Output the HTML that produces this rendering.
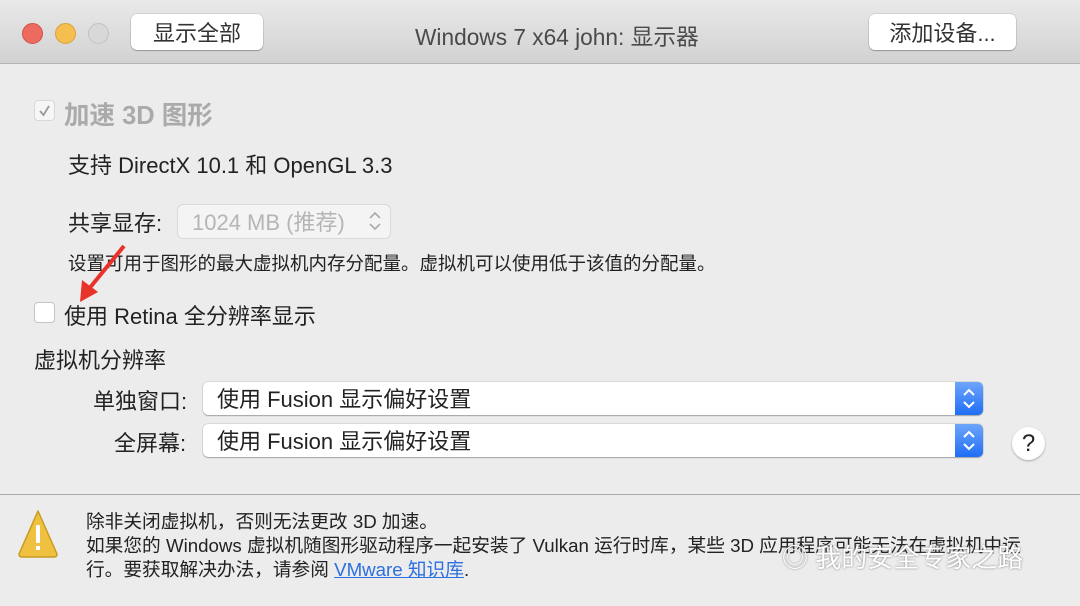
<!DOCTYPE html><html><head><meta charset="utf-8"><style>
body{margin:0;width:1080px;height:606px;background:#ececec;font-family:"Liberation Sans","Noto Sans CJK SC",sans-serif;color:#222;position:relative;overflow:hidden}
.a{position:absolute;white-space:nowrap}
.tb{position:absolute;left:0;top:0;width:1080px;height:63px;background:linear-gradient(#e9e9e9,#d2d2d2);border-bottom:1px solid #b3b3b3}
.dot{position:absolute;top:23px;width:19px;height:19px;border-radius:50%}
.btn{position:absolute;top:14px;height:36px;background:#fff;border-radius:6px;box-shadow:0 1px 1px rgba(0,0,0,.25),0 0 0 .5px rgba(0,0,0,.15);font-size:22px;line-height:39px;text-align:center;color:#333}
.cb{position:absolute;width:21px;height:21px;border-radius:4px;background:#fff;border:1px solid #c4c4c4;box-sizing:border-box}
.sel{position:absolute;left:203px;width:780px;height:33px;background:#fff;border-radius:5px;box-shadow:0 1px 1px rgba(0,0,0,.25),0 0 0 .5px rgba(0,0,0,.15);font-size:22px;line-height:35px}
.sel span{padding-left:14px}
.sel i{position:absolute;right:0;top:0;width:28px;height:33px;background:linear-gradient(#6ea5fa,#1f6ef5);border-radius:0 5px 5px 0}
</style></head><body>
<div class="tb"></div>
<div class="dot" style="left:22px;background:#ed6a5e;border:1px solid #d2534a"></div>
<div class="dot" style="left:55px;background:#f5bf4f;border:1px solid #d9a23b"></div>
<div class="dot" style="left:88px;background:#d8d8d8;border:1px solid #c2c2c2"></div>
<div class="btn" style="left:131px;width:132px">显示全部</div>
<div class="a" style="left:415px;top:19px;font-size:22.7px;color:#4a4a4a">Windows 7 x64 john: 显示器</div>
<div class="btn" style="left:869px;width:147px">添加设备...</div>

<div class="cb" style="left:34px;top:100px;border-color:#d8d8d8;background:#f6f6f6"></div>
<svg class="a" style="left:34px;top:100px" width="21" height="21"><path d="M6 11 L9.5 15 L15 6" fill="none" stroke="#999" stroke-width="1.8"/></svg>
<div class="a" style="left:64px;top:95px;font-size:25.5px;color:#aaa;font-weight:bold">加速 3D 图形</div>
<div class="a" style="left:68px;top:148px;font-size:22px">支持 DirectX 10.1 和 OpenGL 3.3</div>
<div class="a" style="left:68px;top:206px;font-size:22px">共享显存:</div>
<div class="a" style="left:178px;top:205px;width:212px;height:33px;background:#f4f4f4;border-radius:5px;box-shadow:0 0 0 1px #dadada;font-size:22px;line-height:35px;color:#b5b5b5"><span style="padding-left:14px">1024 MB (推荐)</span></div>
<svg class="a" style="left:368px;top:210px" width="14" height="22"><path d="M2 8 L7 3 L12 8 M2 14 L7 19 L12 14" fill="none" stroke="#aaa" stroke-width="1.6"/></svg>
<div class="a" style="left:68px;top:250px;font-size:18.5px">设置可用于图形的最大虚拟机内存分配量。虚拟机可以使用低于该值的分配量。</div>
<svg class="a" style="left:70px;top:240px" width="70" height="70"><line x1="54" y1="6" x2="18" y2="50" stroke="#e8332a" stroke-width="4"/><polygon points="10,62 12,40 28,52" fill="#e8332a"/></svg>
<div class="cb" style="left:34px;top:302px"></div>
<div class="a" style="left:64px;top:299px;font-size:22px">使用 Retina 全分辨率显示</div>
<div class="a" style="left:34px;top:343px;font-size:22px">虚拟机分辨率</div>
<div class="a" style="left:93px;top:384px;font-size:22px">单独窗口:</div>
<div class="sel" style="top:382px"><span>使用 Fusion 显示偏好设置</span><i><svg width="28" height="33"><path d="M9 13 L14 8 L19 13 M9 20 L14 25 L19 20" fill="none" stroke="#fff" stroke-width="2"/></svg></i></div>
<div class="a" style="left:114px;top:426px;font-size:22px">全屏幕:</div>
<div class="sel" style="top:424px"><span>使用 Fusion 显示偏好设置</span><i><svg width="28" height="33"><path d="M9 13 L14 8 L19 13 M9 20 L14 25 L19 20" fill="none" stroke="#fff" stroke-width="2"/></svg></i></div>
<div class="a" style="left:1012px;top:427px;width:33px;height:33px;border-radius:50%;background:#fff;box-shadow:0 1px 2px rgba(0,0,0,.3);font-size:24px;line-height:33px;text-align:center">?</div>

<div class="a" style="left:0;top:494px;width:1080px;height:1px;background:#a9a9a9"></div>
<svg class="a" style="left:16px;top:508px" width="44" height="52"><path d="M22 3 L41 46 Q41 49 38 49 L6 49 Q3 49 3 46 Z" fill="#f0c040" stroke="#c89a20" stroke-width="1.5" stroke-linejoin="round"/><rect x="20" y="17" width="4" height="18" fill="#fff" rx="1"/><rect x="20" y="38" width="4" height="4" fill="#fff"/></svg>
<div class="a" style="left:86px;top:510px;font-size:18.7px;line-height:24px;color:#222">除非关闭虚拟机，否则无法更改 3D 加速。<br>如果您的 Windows 虚拟机随图形驱动程序一起安装了 Vulkan 运行时库，某些 3D 应用程序可能无法在虚拟机中运<br>行。要获取解决办法，请参阅 <span style="color:#2b6fe0;text-decoration:underline">VMware 知识库</span>.</div>
<div class="a" style="left:782px;top:538px;font-size:26px;color:#fff;text-shadow:0 0 2px #777">◎ 我的安全专家之路</div>
</body></html>
